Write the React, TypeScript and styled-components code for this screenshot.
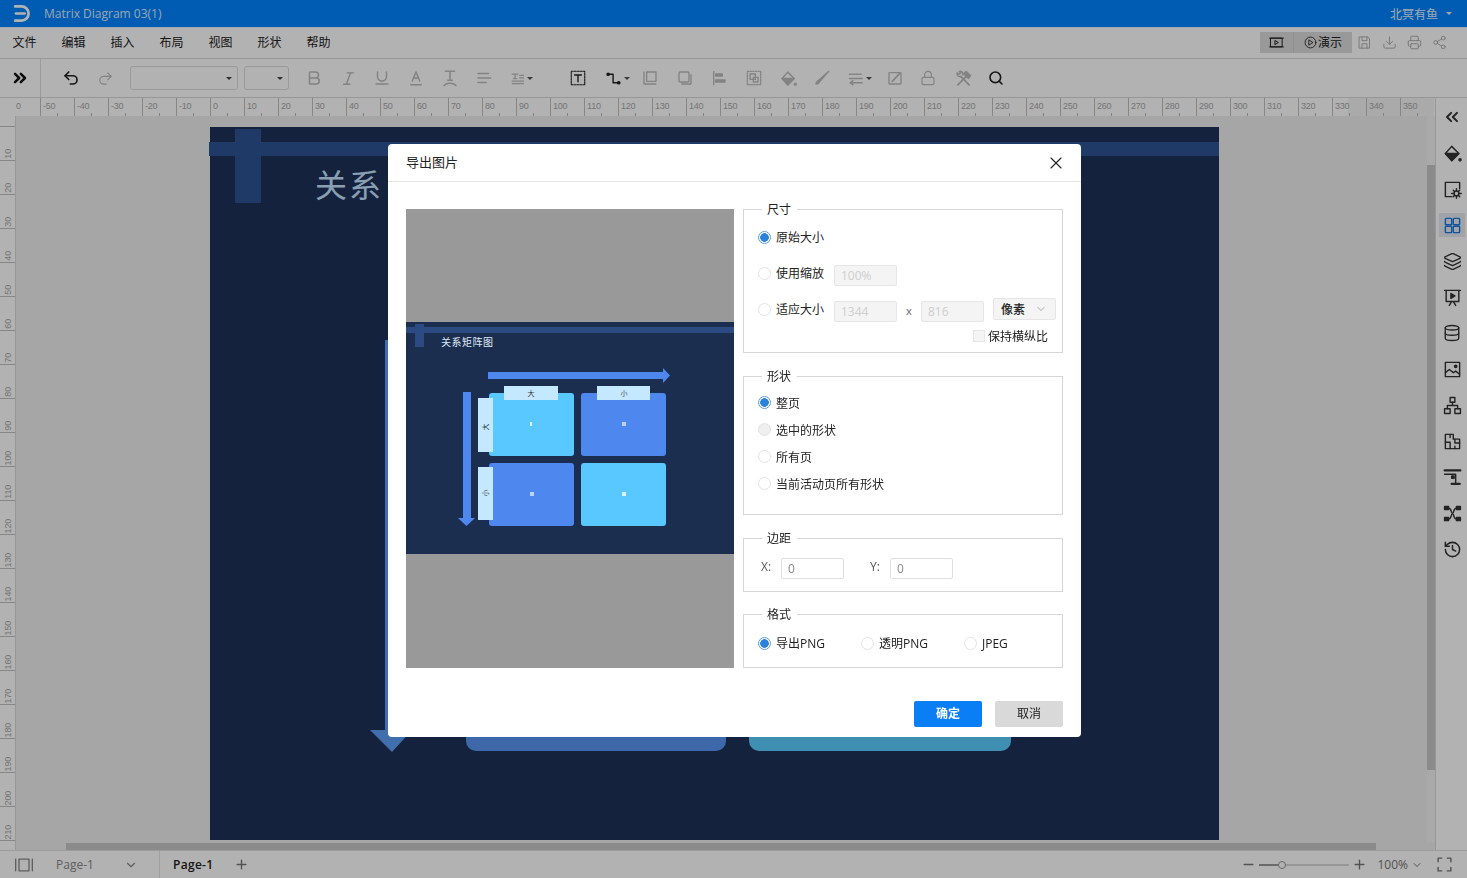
import React from "react";
import styled, { createGlobalStyle } from "styled-components";
import {
  Bold,
  ChevronDown,
  ChevronsLeft,
  ChevronsRight,
  Database,
  Download,
  History,
  Italic,
  Layers,
  Lock,
  Minus,
  Plus,
  Printer,
  Redo2,
  Search,
  Share2,
  Underline,
  Undo2,
  X,
} from "lucide-react";

const FONT = `"Open Sans", "Noto Sans CJK SC", sans-serif`;

const GlobalStyle = createGlobalStyle`
  html, body {
    margin: 0;
    height: 100%;
    overflow: hidden;
    background: #fff;
    font-family: ${FONT};
  }
  * { box-sizing: border-box; }
`;

const Page = styled.div`
  width: 1467px;
  height: 878px;
  display: flex;
  flex-direction: column;
  overflow: hidden;
  color: #333;
`;

const TitleBar = styled.div`
  height: 27px;
  flex: none;
  background: #0085ff;
  color: #fff;
  display: flex;
  align-items: center;
  padding: 0 15px 0 12px;
  font-size: 12px;
`;

const DocName = styled.span`
  margin-left: 13px;
  flex: 1;
  opacity: 0.85;
`;

const UserName = styled.span`
  display: flex;
  align-items: center;
  gap: 8px;
  opacity: 0.9;
`;

const Caret = styled.i`
  display: inline-block;
  border-left: 3px solid transparent;
  border-right: 3px solid transparent;
  border-top: 3px solid currentColor;
`;

const MenuBar = styled.div`
  height: 32px;
  flex: none;
  display: flex;
  align-items: center;
  padding-left: 12.5px;
  padding-bottom: 2px;
  gap: 25px;
  font-size: 12px;
  background: #fff;
  border-top: 1px solid #e4eef8;
  border-bottom: 1px solid #d8d8d8;
`;

const MenuItem = styled.span`
  color: #222;
`;

const MenuRight = styled.div`
  margin-left: auto;
  display: flex;
  align-items: center;
  padding-right: 15px;
`;

const ShowGroup = styled.div`
  display: flex;
  height: 21px;
  width: 92px;
  background: #dcdcdc;
`;

const ShowPart = styled.div<{ $w: number }>`
  width: ${(p) => p.$w}px;
  display: flex;
  align-items: center;
  justify-content: center;
  gap: 1px;
  font-size: 12px;
  color: #222;
  & + & {
    border-left: 1px solid #cfcfcf;
  }
`;

const TopAction = styled.div`
  width: 25px;
  display: flex;
  justify-content: center;
  color: #aaa;
`;

const ToolBar = styled.div`
  height: 39px;
  flex: none;
  display: flex;
  align-items: center;
  background: #fff;
  border-bottom: 1px solid #d8d8d8;
`;

const Collapse = styled.div`
  width: 41px;
  height: 100%;
  flex: none;
  display: flex;
  align-items: center;
  justify-content: center;
  color: #111;
  border-right: 1px solid #dedede;
`;

const Tool = styled.div<{ $ml?: number; $on?: boolean }>`
  width: 34px;
  height: 100%;
  flex: none;
  margin-left: ${(p) => p.$ml ?? 0}px;
  display: flex;
  align-items: center;
  justify-content: center;
  color: ${(p) => (p.$on ? "#222" : "#bcbcbc")};
`;

const FakeSelect = styled.div<{ $w: number; $ml: number }>`
  width: ${(p) => p.$w}px;
  height: 24px;
  flex: none;
  margin-left: ${(p) => p.$ml}px;
  border: 1px solid #dcdcdc;
  border-radius: 3px;
  display: flex;
  align-items: center;
  justify-content: flex-end;
  padding-right: 5px;
  color: #444;
`;

const RulerRow = styled.div`
  height: 18px;
  flex: none;
  display: flex;
  background: linear-gradient(90deg, #fff 1348px, #f4f4f4 1348px);
  overflow: hidden;
  width: 1434px;
`;

const RulerStart = styled.div`
  width: 40px;
  flex: none;
  padding-left: 16px;
  font: 9px/16px "Liberation Sans", sans-serif;
  color: #a8a8a8;
`;

const RulerCell = styled.div`
  width: 34px;
  flex: none;
  position: relative;
  border-left: 1px solid #c0c0c0;
  padding-left: 2px;
  font: 9px/16px "Liberation Sans", sans-serif;
  letter-spacing: -0.2px;
  color: #a8a8a8;
  &::after {
    content: "";
    position: absolute;
    left: 16px;
    bottom: 0;
    height: 3px;
    border-left: 1px solid #bbb;
  }
`;

const Main = styled.div`
  flex: 1;
  display: flex;
  min-height: 0;
  margin-top: -18px;
`;

const SideRuler = styled.div`
  width: 16px;
  flex: none;
  margin-top: 18px;
  background: #fff;
  overflow: hidden;
  border-right: 1px solid #d8d8d8;
`;

const SideCell = styled.div<{ $h: number }>`
  height: ${(p) => p.$h}px;
  border-bottom: 1px solid #c0c0c0;
  display: flex;
  justify-content: center;
  align-items: flex-end;
  padding-bottom: 1px;
  color: #a8a8a8;
  font: 9px/10px "Liberation Sans", sans-serif;
  letter-spacing: -0.2px;
`;

const SideLabel = styled.span`
  writing-mode: vertical-rl;
  transform: rotate(180deg);
`;

const CanvasColumn = styled.div`
  flex: 1;
  min-width: 0;
  display: flex;
  flex-direction: column;
  padding-top: 18px;
`;

const CanvasRow = styled.div`
  flex: 1;
  display: flex;
  min-height: 0;
  background: #eee;
`;

const CanvasArea = styled.div`
  flex: 1;
  padding: 11px 0 0 194px;
  overflow: hidden;
`;

const Paper = styled.div`
  width: 1009px;
  height: 713px;
  position: relative;
  background: #1f3259;
`;

const PaperBand = styled.div`
  position: absolute;
  left: -1px;
  right: 0;
  top: 15px;
  height: 14px;
  background: #2e5396;
`;

const PaperPost = styled.div`
  position: absolute;
  left: 25px;
  top: 2px;
  width: 26px;
  height: 74px;
  background: #2e5396;
`;

const PaperTitle = styled.div`
  position: absolute;
  left: 105px;
  top: 42px;
  font-size: 32px;
  line-height: 32px;
  letter-spacing: 2px;
  white-space: nowrap;
  color: #c6e6ff;
`;

const PaperCard = styled.div<{ $l: number; $w: number; $c: string }>`
  position: absolute;
  left: ${(p) => p.$l}px;
  width: ${(p) => p.$w}px;
  top: 500px;
  bottom: 89px;
  border-radius: 0 0 10px 10px;
  background: ${(p) => p.$c};
`;

const PaperArrow = styled.svg`
  position: absolute;
  left: 160px;
  top: 213px;
`;

const VScrollTrack = styled.div`
  width: 8px;
  flex: none;
  padding-top: 49px;
  padding-bottom: 73px;
  display: flex;
  background: #f2f2f2;
`;

const ScrollThumb = styled.div`
  flex: 1;
  background: #c8c8c8;
`;

const HScrollTrack = styled.div`
  height: 7px;
  flex: none;
  margin-bottom: 0;
  padding: 0 59px 0 50px;
  display: flex;
  background: #eee;
`;

const Sidebar = styled.div`
  width: 32px;
  flex: none;
  display: flex;
  flex-direction: column;
  align-items: center;
  padding: 1px 0 0 1px;
  background: #fff;
  border-left: 1px solid #d8d8d8;
`;

const SideItem = styled.div<{ $on?: boolean }>`
  width: 26px;
  height: 36px;
  display: flex;
  align-items: center;
  justify-content: center;
  color: ${(p) => (p.$on ? "#1a78e0" : "#333")};
  background: ${(p) => (p.$on ? "linear-gradient(#fff 6px, #e6ebf2 6px, #e6ebf2 30px, #fff 30px)" : "none")};
`;

const StatusBar = styled.div`
  height: 28px;
  flex: none;
  display: flex;
  align-items: center;
  background: #fff;
  border-top: 1px solid #e0e0e0;
  font-size: 12px;
  color: #666;
`;

const PageList = styled.div`
  width: 146px;
  margin-left: 14px;
  height: 100%;
  display: flex;
  align-items: center;
  border-right: 1px solid #e4e4e4;
  color: #888;
`;

const PageName = styled.span`
  margin-left: 22px;
  flex: 1;
`;

const PageChevron = styled(ChevronDown)`
  margin-right: 21px;
`;

const ActivePage = styled.span`
  margin-left: 13px;
  font-weight: 600;
  letter-spacing: 0.3px;
  color: #222;
`;

const AddPage = styled.span`
  margin-left: 21px;
  display: flex;
  color: #777;
`;

const ZoomBox = styled.div`
  margin-left: auto;
  display: flex;
  align-items: center;
  color: #777;
  padding-right: 14px;
`;

const ZoomSlider = styled.div`
  width: 90px;
  height: 2px;
  margin: 0 3px;
  position: relative;
  background: linear-gradient(90deg, #999 25%, #d8d8d8 25%);
`;

const ZoomKnob = styled.i`
  position: absolute;
  left: 19px;
  top: -3px;
  width: 8px;
  height: 8px;
  border: 1px solid #999;
  border-radius: 50%;
  background: #fff;
`;

const ZoomText = styled.span`
  margin-left: 10px;
  margin-right: 3px;
`;

const FullScreen = styled.span`
  display: flex;
  margin-left: 13px;
`;

const Overlay = styled.div`
  position: fixed;
  inset: 0;
  background: rgba(0, 0, 0, 0.3);
  display: grid;
  place-items: center;
  padding: 3px 0 0 2px;
`;

const Modal = styled.div`
  width: 693px;
  height: 593px;
  background: #fff;
  border-radius: 4px;
  display: flex;
  flex-direction: column;
  color: #222;
`;

const ModalHead = styled.div`
  height: 38px;
  flex: none;
  display: flex;
  align-items: center;
  justify-content: space-between;
  padding: 0 15px 2px 18px;
  font-size: 13px;
  border-bottom: 1px solid #e3e3e3;
`;

const CloseBtn = styled.span`
  display: flex;
  margin-top: 3px;
  color: #222;
`;

const ModalBody = styled.div`
  height: 486px;
  flex: none;
  display: flex;
  padding: 19px 18px 0;
  gap: 9px;
`;

const Preview = styled.div`
  width: 328px;
  height: 459px;
  margin-top: 8px;
  padding-bottom: 1px;
  flex: none;
  background: #999;
  display: flex;
  align-items: center;
`;

const Options = styled.div`
  width: 320px;
  flex: none;
  display: flex;
  flex-direction: column;
`;

const Group = styled.fieldset<{ $h: number; $mt?: number; $pt?: number }>`
  height: ${(p) => p.$h}px;
  flex: none;
  margin: ${(p) => p.$mt ?? 0}px 0 0;
  padding: ${(p) => p.$pt ?? 0}px 6px 0 14px;
  border: 1px solid #d6d6d6;
  min-width: 0;
  display: flex;
  flex-direction: column;
  font-size: 12px;
`;

const Legend = styled.legend`
  margin-left: 4px;
  padding: 1px 6px 0 5px;
  font-size: 12px;
  line-height: 15px;
`;

const Row = styled.div<{ $h: number }>`
  height: ${(p) => p.$h}px;
  flex: none;
  display: flex;
  align-items: center;
`;

const RadioDot = styled.i<{ $on?: boolean; $off?: boolean }>`
  width: 13px;
  height: 13px;
  flex: none;
  border-radius: 50%;
  border: 1px solid ${(p) => (p.$on ? "#5b9de0" : "#e2e2e2")};
  background: ${(p) =>
    p.$on
      ? "radial-gradient(circle, #2a82dc 0 4px, #fff 4.6px)"
      : p.$off
        ? "#efefef"
        : "#fff"};
  margin-right: 5px;
`;

const OptionText = styled.span<{ $w?: number }>`
  width: ${(p) => (p.$w ? `${p.$w}px` : "auto")};
  flex: none;
  white-space: nowrap;
`;

const Field = styled.div<{ $ml?: number; $off?: boolean }>`
  width: 63px;
  height: 21px;
  flex: none;
  margin-left: ${(p) => p.$ml ?? 0}px;
  margin-top: ${(p) => (p.$off ? 4 : 0)}px;
  border: 1px solid ${(p) => (p.$off ? "#e6e6e6" : "#dedede")};
  border-radius: 2px;
  background: ${(p) => (p.$off ? "#f4f4f4" : "#fff")};
  color: ${(p) => (p.$off ? "#cecece" : "#888")};
  padding-left: 6px;
  line-height: 20px;
  font-size: 12px;
`;

const Times = styled.span`
  margin-left: 9px;
  width: 15px;
  color: #666;
  font-size: 11px;
  padding-top: 2px;
`;

const UnitSelect = styled.div`
  width: 63px;
  height: 22px;
  margin-left: 9px;
  flex: none;
  display: flex;
  align-items: center;
  justify-content: space-between;
  padding: 0 8px 1px 7px;
  background: #f4f4f4;
  border: 1px solid #e6e6e6;
  border-radius: 2px;
  color: #222;
  font-weight: 500;
`;

const Keep = styled.div`
  height: 18px;
  display: flex;
  align-items: center;
  justify-content: flex-end;
  padding-right: 8px;
`;

const CheckBox = styled.i`
  width: 12px;
  height: 12px;
  margin-right: 3px;
  background: #f4f4f4;
  border: 1px solid #e6e6e6;
`;

const AxisLabel = styled.span<{ $ml?: number }>`
  margin-left: ${(p) => p.$ml ?? 3}px;
  width: 20px;
  flex: none;
  color: #555;
  position: relative;
  top: -2px;
`;

const FormatItem = styled.div`
  width: 103px;
  flex: none;
  display: flex;
  align-items: center;
  &:last-child {
    width: auto;
  }
`;

const ModalFoot = styled.div`
  margin-top: 33px;
  display: flex;
  justify-content: flex-end;
  gap: 13px;
  padding-right: 18px;
`;

const Btn = styled.div<{ $primary?: boolean }>`
  width: 68px;
  height: 26px;
  padding-bottom: 2px;
  border-radius: 2px;
  font-size: 12px;
  font-weight: ${(p) => (p.$primary ? 700 : 400)};
  display: flex;
  align-items: center;
  justify-content: center;
  color: ${(p) => (p.$primary ? "#fff" : "#222")};
  background: ${(p) => (p.$primary ? "#0a7ff5" : "#d9d9d9")};
`;

const Ico = styled.svg.attrs<{ $s?: number; $w?: number }>((p) => ({
  width: p.$s ?? 18,
  height: p.$s ?? 18,
  viewBox: "0 0 24 24",
  fill: "none",
  stroke: "currentColor",
  strokeWidth: p.$w ?? 2,
  strokeLinecap: "round",
  strokeLinejoin: "round",
}))<{ $s?: number; $w?: number }>`
  flex: none;
  display: block;
`;

const glyphs: Record<string, React.ReactNode> = {
  baseline: (
    <>
      <path d="M5 21h14" />
      <path d="M7 16 12 4l5 12M9 12h6" />
    </>
  ),
  tarc: (
    <>
      <path d="M6 3h12M12 3v12M9 15h6" />
      <path d="M4 22c4-4 12-4 16 0" />
    </>
  ),
  lines: <path d="M4 6h14M4 12h17M4 18h11" />,
  textlist: (
    <>
      <path d="M2 5h9M6.500 5v7M4 12h5M14 7h6M14 11h6M2 16h18M2 20h18" />
    </>
  ),
  tbox: (
    <>
      <rect x="3" y="3" width="18" height="18" strokeWidth="1.500" strokeDasharray="2.500 1.500" />
      <path d="M7.500 8h9M12 8v9" strokeWidth="1.800" />
    </>
  ),
  connector: (
    <>
      <circle cx="3" cy="6" r="1.600" fill="currentColor" />
      <path d="M3 6h7v12h8" />
      <circle cx="18" cy="18" r="1.600" fill="currentColor" />
    </>
  ),
  front: (
    <>
      <path d="M3 3v18h18" />
      <rect x="7" y="3" width="14" height="14" />
    </>
  ),
  back: (
    <>
      <rect x="3" y="3" width="15" height="15" rx="2" />
      <path d="M21 7v14H7" />
    </>
  ),
  alignleft: (
    <>
      <path d="M4 2v20" />
      <rect x="7" y="6" width="10" height="3" fill="currentColor" />
      <rect x="7" y="15" width="14" height="3" fill="currentColor" />
    </>
  ),
  group: (
    <>
      <rect x="2" y="2" width="20" height="20" strokeDasharray="2 2" />
      <rect x="6" y="6" width="8" height="8" />
      <rect x="11" y="11" width="7" height="7" />
    </>
  ),
  fill: (
    <>
      <path d="M11 3 3 12l8 9 9-9z" />
      <path d="M3 12h17l-9 9z" fill="currentColor" />
      <circle cx="21.500" cy="20" r="1.400" fill="currentColor" />
    </>
  ),
  pen: (
    <path d="M22 2 11 12l-6 5c-1.500 1.500-2 3-2 4 1 0 3-.5 4.500-2l5-6L22 2z" fill="currentColor" />
  ),
  linestyle: (
    <>
      <path d="M2 6h18" strokeDasharray="1.500 1.500" />
      <path d="M2 12h18" />
      <path d="M20 18H3M7 15l-4 3 4 3" />
    </>
  ),
  edit: (
    <>
      <rect x="3" y="4" width="18" height="17" rx="1" />
      <path d="m8 17 11-12" strokeWidth="2.600" />
    </>
  ),
  tools: (
    <>
      <path d="M4 21 16 9" strokeWidth="2.600" />
      <path d="m12 5 4-3 6 6-3 4z" fill="currentColor" />
      <path d="M20 21 8 9" strokeWidth="2.600" />
      <path d="M8 9a4 4 0 0 1-5-5l3 2 2-2-2-2a4 4 0 0 1 5 5" />
    </>
  ),
  logo: (
    <>
      <path d="M4 3h8a9 9 0 0 1 0 18H4" strokeWidth="3.400" />
      <path d="M5 12h11" strokeWidth="3.400" />
    </>
  ),
  slideplay: (
    <>
      <rect x="3" y="5" width="18" height="14" />
      <path d="M1 5h22M1 19h22" />
      <path d="m10 9 5 3-5 3z" />
    </>
  ),
  playcircle: (
    <>
      <circle cx="12" cy="12" r="10" />
      <path d="m9.500 7.500 7 4.500-7 4.500z" />
    </>
  ),
  save: (
    <>
      <path d="M4 3h13l3 3v15H4z" />
      <path d="M8 3v6h8V3M8 21v-7h8v7" />
    </>
  ),
  pagesetup: (
    <>
      <path d="M11 21H3V3h18v8" />
      <circle cx="17" cy="17" r="3" />
      <path d="M17 11v2.500M17 20.500V23M11 17h2.500M20.500 17H23M13 13l1.500 1.500M19.500 19.500 21 21M13 21l1.500-1.500M19.500 14.500 21 13" />
    </>
  ),
  grid: (
    <>
      <rect x="3" y="3" width="8" height="8" rx="1" />
      <rect x="13" y="3" width="8" height="8" rx="1" />
      <rect x="3" y="13" width="8" height="8" rx="1" />
      <rect x="13" y="13" width="8" height="8" rx="1" />
    </>
  ),
  present: (
    <>
      <path d="M2 3h20M4 3v14h16V3M8 22l3-5M16 22l-3-5" />
      <path d="m10 7 5 3-5 3z" fill="currentColor" />
    </>
  ),
  picture: (
    <>
      <rect x="3" y="3" width="18" height="18" />
      <path d="m3 16 5-4 5 4 3-2 5 4" />
      <circle cx="16" cy="8" r="1.500" fill="currentColor" />
    </>
  ),
  org: (
    <>
      <rect x="9" y="2" width="6" height="6" />
      <rect x="2" y="16" width="7" height="6" />
      <rect x="15" y="16" width="7" height="6" />
      <path d="M12 8v4M5.500 16v-4h13v4" />
    </>
  ),
  floor: (
    <>
      <path d="M3 3h10v6h8v12H3z" />
      <path d="M3 13h6M9 3v4M9 13v8M15 9v5h6M15 18v3" />
    </>
  ),
  swim: (
    <>
      <path d="M2 3h20" strokeWidth="2.600" />
      <path d="M2 8h14v12" />
      <path d="M11 20h10" strokeWidth="3" />
      <rect x="11" y="10" width="3" height="3" fill="currentColor" />
    </>
  ),
  cross: (
    <>
      <rect x="2" y="3" width="5" height="4" fill="currentColor" />
      <rect x="17" y="3" width="5" height="4" fill="currentColor" />
      <rect x="2" y="17" width="5" height="4" fill="currentColor" />
      <rect x="17" y="17" width="5" height="4" fill="currentColor" />
      <path d="M7 5c4 0 3 7 5 7s1-7 5-7M7 19c4 0 3-7 5-7s1 7 5 7" />
    </>
  ),
  screen: (
    <>
      <path d="M2 5v14M22 5v14" />
      <rect x="6" y="5" width="12" height="14" />
    </>
  ),
  corners: <path d="M3 8V3h5M16 3h5v5M21 16v5h-5M8 21H3v-5" />,
};

const Glyph = ({ n, s, w }: { n: string; s?: number; w?: number }) => (
  <Ico $s={s} $w={w}>
    {glyphs[n]}
  </Ico>
);

const MiniCaret = styled(Caret)`
  margin-left: 1px;
  color: #555;
`;

const menus = ["文件", "编辑", "插入", "布局", "视图", "形状", "帮助"];

const rulerValues = Array.from({ length: 41 }, (_, i) => -50 + i * 10);
const sideValues = Array.from({ length: 21 }, (_, i) => 10 + i * 10);

const sideIcons: { el: React.ReactNode; on?: boolean }[] = [
  { el: <ChevronsLeft size={20} strokeWidth={2.4} /> },
  { el: <Glyph n="fill" s={19} w={1.8} /> },
  { el: <Glyph n="pagesetup" s={19} w={1.8} /> },
  { el: <Glyph n="grid" s={19} w={1.8} />, on: true },
  { el: <Layers size={19} strokeWidth={1.7} /> },
  { el: <Glyph n="present" s={19} w={1.8} /> },
  { el: <Database size={18} strokeWidth={1.8} /> },
  { el: <Glyph n="picture" s={19} w={1.8} /> },
  { el: <Glyph n="org" s={19} w={1.8} /> },
  { el: <Glyph n="floor" s={19} w={1.8} /> },
  { el: <Glyph n="swim" s={19} w={1.8} /> },
  { el: <Glyph n="cross" s={19} w={1.8} /> },
  { el: <History size={19} strokeWidth={1.9} /> },
];

const Diagram = () => (
  <svg width="328" height="232" viewBox="0 0 328 232">
    <rect width="328" height="232" fill="#1c2e50" />
    <rect y="5" width="328" height="6" fill="#2c4b82" />
    <rect x="9" y="2" width="9" height="23" fill="#2c4b82" />
    <text x="35" y="24" fontSize="10" letterSpacing="0.5" fill="#dfe8f4">
      关系矩阵图
    </text>
    <path d="M82 50h175v-4l7 7.500-7 7.500v-4H82z" fill="#4e88ee" />
    <path d="M57 70h8v126h4l-8.500 8-8.500-8h5z" fill="#4e88ee" />
    <rect x="83" y="71" width="85" height="63" rx="3" fill="#58c8ff" />
    <rect x="175" y="71" width="85" height="63" rx="3" fill="#4e88ee" />
    <rect x="83" y="141" width="85" height="63" rx="3" fill="#4e88ee" />
    <rect x="175" y="141" width="85" height="63" rx="3" fill="#58c8ff" />
    <rect x="98" y="64" width="54" height="14" fill="#c3e8ff" />
    <rect x="191" y="64" width="53" height="14" fill="#c3e8ff" />
    <rect x="72" y="76" width="15" height="54" fill="#c3e8ff" />
    <rect x="72" y="145" width="15" height="53" fill="#c3e8ff" />
    <text x="125" y="74" fontSize="7" textAnchor="middle" fill="#333">大</text>
    <text x="218" y="74" fontSize="7" textAnchor="middle" fill="#555">小</text>
    <text x="0" y="0" fontSize="7" textAnchor="middle" fill="#333" transform="translate(82 105) rotate(-90)">大</text>
    <text x="0" y="0" fontSize="7" textAnchor="middle" fill="#333" transform="translate(82 171) rotate(-90)">小</text>
    <rect x="124" y="100" width="2" height="4" fill="#d8f4ff" />
    <rect x="216" y="100" width="4" height="4" fill="#b8d4fa" />
    <rect x="124" y="170" width="4" height="4" fill="#b8d4fa" />
    <rect x="216" y="170" width="4" height="4" fill="#d8f4ff" />
  </svg>
);

const Radio = ({ on, off, children, w }: { on?: boolean; off?: boolean; w?: number; children: React.ReactNode }) => (
  <>
    <RadioDot $on={on} $off={off} />
    <OptionText $w={w}>{children}</OptionText>
  </>
);

export default function App() {
  return (
    <Page>
      <GlobalStyle />
      <TitleBar>
        <Glyph n="logo" s={19} />
        <DocName>Matrix Diagram 03(1)</DocName>
        <UserName>
          北冥有鱼 <Caret />
        </UserName>
      </TitleBar>
      <MenuBar>
        {menus.map((m) => (
          <MenuItem key={m}>{m}</MenuItem>
        ))}
        <MenuRight>
          <ShowGroup>
            <ShowPart $w={33}>
              <Glyph n="slideplay" s={15} w={1.6} />
            </ShowPart>
            <ShowPart $w={59}>
              <Glyph n="playcircle" s={13} w={1.6} />
              演示
            </ShowPart>
          </ShowGroup>
          <TopAction>
            <Glyph n="save" s={15} w={1.5} />
          </TopAction>
          <TopAction>
            <Download size={15} strokeWidth={1.5} />
          </TopAction>
          <TopAction>
            <Printer size={15} strokeWidth={1.5} />
          </TopAction>
          <TopAction>
            <Share2 size={15} strokeWidth={1.5} />
          </TopAction>
        </MenuRight>
      </MenuBar>
      <ToolBar>
        <Collapse>
          <ChevronsRight size={20} strokeWidth={3} />
        </Collapse>
        <Tool $ml={13} $on>
          <Undo2 size={18} strokeWidth={2.2} />
        </Tool>
        <Tool>
          <Redo2 size={17} strokeWidth={1.6} />
        </Tool>
        <FakeSelect $w={108} $ml={8}>
          <Caret />
        </FakeSelect>
        <FakeSelect $w={45} $ml={6}>
          <Caret />
        </FakeSelect>
        <Tool $ml={8}>
          <Bold size={18} />
        </Tool>
        <Tool>
          <Italic size={17} />
        </Tool>
        <Tool>
          <Underline size={18} />
        </Tool>
        <Tool>
          <Glyph n="baseline" />
        </Tool>
        <Tool>
          <Glyph n="tarc" />
        </Tool>
        <Tool>
          <Glyph n="lines" />
        </Tool>
        <Tool $ml={4}>
          <Glyph n="textlist" s={15} />
          <MiniCaret />
        </Tool>
        <Tool $ml={22} $on>
          <Glyph n="tbox" s={18} />
        </Tool>
        <Tool $ml={6} $on>
          <Glyph n="connector" s={17} />
          <MiniCaret />
        </Tool>
        <Tool $ml={-2}>
          <Glyph n="front" s={16} />
        </Tool>
        <Tool $ml={1}>
          <Glyph n="back" s={16} />
        </Tool>
        <Tool>
          <Glyph n="alignleft" s={16} />
        </Tool>
        <Tool $ml={1}>
          <Glyph n="group" s={16} />
        </Tool>
        <Tool>
          <Glyph n="fill" s={17} />
        </Tool>
        <Tool>
          <Glyph n="pen" s={16} />
        </Tool>
        <Tool $ml={4}>
          <Glyph n="linestyle" s={17} />
          <MiniCaret />
        </Tool>
        <Tool $ml={1}>
          <Glyph n="edit" s={16} />
        </Tool>
        <Tool $ml={-1}>
          <Lock size={16} strokeWidth={1.8} />
        </Tool>
        <Tool $ml={1}>
          <Glyph n="tools" s={17} />
        </Tool>
        <Tool $ml={-1} $on>
          <Search size={16} strokeWidth={2.4} />
        </Tool>
      </ToolBar>
      <RulerRow>
        <RulerStart>0</RulerStart>
        {rulerValues.map((v) => (
          <RulerCell key={v}>{v}</RulerCell>
        ))}
      </RulerRow>
      <Main>
        <SideRuler>
          <SideCell $h={11} />
          {sideValues.map((v) => (
            <SideCell key={v} $h={34}>
              <SideLabel>{v}</SideLabel>
            </SideCell>
          ))}
        </SideRuler>
        <CanvasColumn>
          <CanvasRow>
            <CanvasArea>
              <Paper>
                <PaperBand />
                <PaperPost />
                <PaperTitle>关系</PaperTitle>
                <PaperArrow width="44" height="413" viewBox="0 0 44 413">
                  <path d="M15 0h14v390h13l-20 22L0 390h15z" fill="#5e9ef8" />
                </PaperArrow>
                <PaperCard $l={256} $w={260} $c="#5a96f4" />
                <PaperCard $l={539} $w={262} $c="#59cdff" />
              </Paper>
            </CanvasArea>
            <VScrollTrack>
              <ScrollThumb />
            </VScrollTrack>
          </CanvasRow>
          <HScrollTrack>
            <ScrollThumb />
          </HScrollTrack>
        </CanvasColumn>
        <Sidebar>
          {sideIcons.map((s, i) => (
            <SideItem key={i} $on={s.on}>
              {s.el}
            </SideItem>
          ))}
        </Sidebar>
      </Main>
      <StatusBar>
        <PageList>
          <Glyph n="screen" s={20} w={1.6} />
          <PageName>Page-1</PageName>
          <PageChevron size={14} />
        </PageList>
        <ActivePage>Page-1</ActivePage>
        <AddPage>
          <Plus size={15} strokeWidth={2.2} />
        </AddPage>
        <ZoomBox>
          <Minus size={15} strokeWidth={2.2} />
          <ZoomSlider>
            <ZoomKnob />
          </ZoomSlider>
          <Plus size={15} strokeWidth={2.2} />
          <ZoomText>100%</ZoomText>
          <ChevronDown size={12} />
          <FullScreen>
            <Glyph n="corners" s={17} />
          </FullScreen>
        </ZoomBox>
      </StatusBar>

      <Overlay>
        <Modal>
          <ModalHead>
            导出图片
            <CloseBtn>
              <X size={20} strokeWidth={1.3} />
            </CloseBtn>
          </ModalHead>
          <ModalBody>
            <Preview>
              <Diagram />
            </Preview>
            <Options>
              <Group $h={152} $pt={2}>
                <Legend>尺寸</Legend>
                <Row $h={36}>
                  <Radio on>原始大小</Radio>
                </Row>
                <Row $h={36}>
                  <Radio w={48}>使用缩放</Radio>
                  <Field $ml={10} $off>
                    100%
                  </Field>
                </Row>
                <Row $h={36}>
                  <Radio w={48}>适应大小</Radio>
                  <Field $ml={10} $off>
                    1344
                  </Field>
                  <Times>x</Times>
                  <Field $off>816</Field>
                  <UnitSelect>
                    像素
                    <ChevronDown size={12} color="#aaa" />
                  </UnitSelect>
                </Row>
                <Keep>
                  <CheckBox />
                  保持横纵比
                </Keep>
              </Group>
              <Group $h={147} $mt={15} $pt={5}>
                <Legend>形状</Legend>
                <Row $h={27}>
                  <Radio on>整页</Radio>
                </Row>
                <Row $h={27}>
                  <Radio off>选中的形状</Radio>
                </Row>
                <Row $h={27}>
                  <Radio>所有页</Radio>
                </Row>
                <Row $h={27}>
                  <Radio>当前活动页所有形状</Radio>
                </Row>
              </Group>
              <Group $h={62} $mt={15} $pt={1}>
                <Legend>边距</Legend>
                <Row $h={42}>
                  <AxisLabel>X:</AxisLabel>
                  <Field>0</Field>
                  <AxisLabel $ml={26}>Y:</AxisLabel>
                  <Field>0</Field>
                </Row>
              </Group>
              <Group $h={62} $mt={14} $pt={1}>
                <Legend>格式</Legend>
                <Row $h={40}>
                  <FormatItem>
                    <Radio on>导出PNG</Radio>
                  </FormatItem>
                  <FormatItem>
                    <Radio>透明PNG</Radio>
                  </FormatItem>
                  <FormatItem>
                    <Radio>JPEG</Radio>
                  </FormatItem>
                </Row>
              </Group>
            </Options>
          </ModalBody>
          <ModalFoot>
            <Btn $primary>确定</Btn>
            <Btn>取消</Btn>
          </ModalFoot>
        </Modal>
      </Overlay>
    </Page>
  );
}
